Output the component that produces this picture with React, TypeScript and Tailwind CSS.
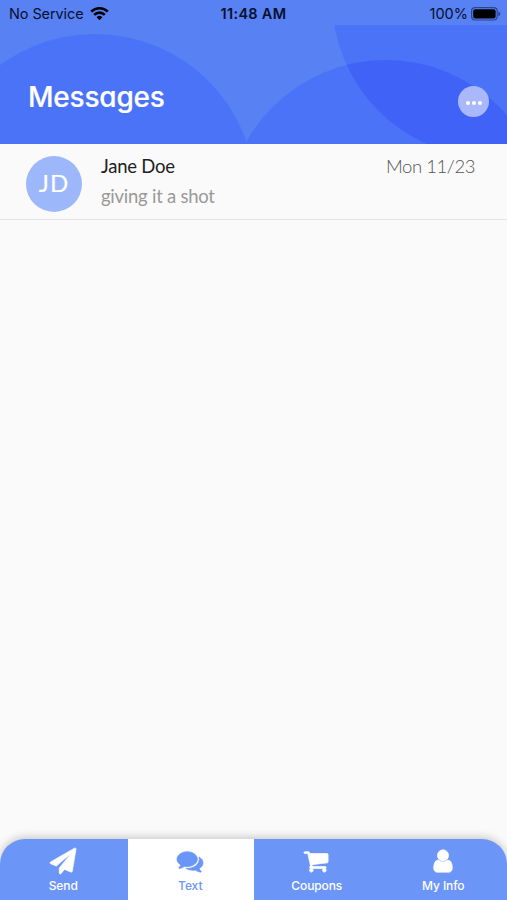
import clsx from "clsx";

const ICONS = {
  send: "M1764 11q33 24 27 64l-256 1536q-5 29-32 45-14 8-31 8-11 0-24-5l-453-185-242 295q-18 23-49 23-13 0-22-4-19-7-30.5-23.5t-11.5-36.5v-349l864-1059-1069 925-395-162q-37-14-40-55-2-40 32-59l1664-960q15-9 32-9 20 0 36 11z",
  text: "M1408 768q0 139-94 257t-256.5 186.5-353.5 68.5q-86 0-176-16-124 88-278 128-36 9-86 16h-3q-11 0-20.5-8t-11.5-21q-1-3-1-6.5t.5-6.5 2-6l2.5-5 3.5-5.5 4-5 4.5-5 4-4.5q5-6 23-25t26-29.5 22.5-29 25-38.5 20.5-44q-124-72-195-177t-71-224q0-139 94-257t256.5-186.5 353.5-68.5 353.5 68.5 256.5 186.5 94 257zm384 256q0 120-71 224.5t-195 176.5q10 24 20.5 44t25 38.5 22.5 29 26 29.5 23 25q1 1 4 4.5t4.5 5 4 5 3.5 5.5l2.5 5 2 6 .5 6.5-1 6.5q-3 14-13 22t-22 7q-50-7-86-16-154-40-278-128-90 16-176 16-271 0-472-132 58 4 88 4 161 0 309-45t264-129q125-92 192-212t67-254q0-77-23-152 129 71 204 178t75 230z",
  cart: "M704 1536q0 52-38 90t-90 38-90-38-38-90 38-90 90-38 90 38 38 90zm896 0q0 52-38 90t-90 38-90-38-38-90 38-90 90-38 90 38 38 90zm128-1088v512q0 24-16.5 42.5t-40.5 21.5l-1044 122q13 60 13 70 0 16-24 64h920q26 0 45 19t19 45-19 45-45 19h-1024q-26 0-45-19t-19-45q0-11 8-31.5t16-36 21.5-40 15.5-29.5l-177-823h-204q-26 0-45-19t-19-45 19-45 45-19h256q16 0 28.5 6.5t19.5 15.5 13 24.5 8 26 5.5 29.5 4.5 26h1201q26 0 45 19t19 45z",
  user: "M1536 1399q0 109-62.5 187t-150.5 78h-854q-88 0-150.5-78t-62.5-187q0-85 8.5-160.5t31.5-152 58.5-131 94-89 134.5-34.5q131 128 313 128t313-128q76 0 134.5 34.5t94 89 58.5 131 31.5 152 8.5 160.5zm-256-887q0 159-112.5 271.5t-271.5 112.5-271.5-112.5-112.5-271.5 112.5-271.5 271.5-112.5 271.5 112.5 112.5 271.5z",
};

const TABS = [
  { label: "Send", icon: ICONS.send },
  { label: "Text", icon: ICONS.text, active: true },
  { label: "Coupons", icon: ICONS.cart },
  { label: "My Info", icon: ICONS.user },
];

function StatusBar() {
  return (
    <div className="relative grid h-[25px] grid-cols-3 items-center pt-[2px] pr-[6px] pl-[9px] font-['Inter',sans-serif] text-[14.5px] text-[#07102b]">
      <div className="flex items-center gap-[6px]">
        <span className="whitespace-nowrap tracking-[-0.1px]">No Service</span>
        <svg width="19" height="15" viewBox="0 0 19 15" fill="none" stroke="#000" strokeWidth="2.6">
          <path d="M1.2 5.6a11.8 11.8 0 0 1 16.6 0" />
          <path d="M4.2 8.8a7.5 7.5 0 0 1 10.6 0" />
          <path d="M9.5 14.2 6.6 11.3a4.1 4.1 0 0 1 5.8 0z" fill="#000" stroke="none" />
        </svg>
      </div>
      <span className="-ml-[3px] text-center text-[14.5px] font-semibold tracking-[0.3px] whitespace-nowrap">
        11:48 AM
      </span>
      <div className="flex items-center justify-end gap-[3px]">
        <span>100%</span>
        <svg width="30" height="14" viewBox="0 0 30 14">
          <rect x="0.6" y="0.6" width="25.6" height="12.4" rx="3.5" fill="none" stroke="#2d458d" strokeWidth="1.2" />
          <rect x="2.2" y="2.2" width="22.4" height="9.2" rx="2" fill="#000" />
          <path d="M27.4 4.6q2 .8 2 2.3t-2 2.3z" fill="#2d458d" />
        </svg>
      </div>
    </div>
  );
}

function Header() {
  return (
    <header className="relative h-[143.5px] shrink-0 overflow-hidden bg-[#5881f4]">
      {/* Overlapping circles behind the title */}
      <svg className="absolute inset-0" width="507" height="144" viewBox="0 0 507 144">
        <defs>
          <clipPath id="below-status">
            <rect y="25" width="507" height="119" />
          </clipPath>
          <clipPath id="corner">
            <circle cx="492" cy="-2" r="160" />
          </clipPath>
        </defs>
        <g clipPath="url(#below-status)">
          <circle cx="95" cy="194.5" r="160.5" fill="#4b73f7" />
          <circle cx="492" cy="-2" r="160" fill="#4b73f7" />
          <circle cx="386" cy="220" r="160" fill="#4b73f7" />
          <circle cx="386" cy="220" r="160" fill="#4162f7" clipPath="url(#corner)" />
        </g>
      </svg>
      <StatusBar />
      <div className="relative flex items-center justify-between pt-[52px] pr-[18px] pl-[28px]">
        <h1 className="font-['Inter',sans-serif] text-[28px] leading-[36px] font-medium tracking-[-0.2px] text-white [font-feature-settings:'cv11'] [-webkit-text-stroke:0.2px_white]">
          Messages
        </h1>
        <button className="mt-[9px] flex size-[31px] items-center justify-center gap-[2px] rounded-full bg-[#a9b8fa]">
          <span className="mt-[2px] size-[4px] rounded-full bg-white" />
          <span className="mt-[2px] size-[4px] rounded-full bg-white" />
          <span className="mt-[2px] size-[4px] rounded-full bg-white" />
        </button>
      </div>
    </header>
  );
}

function Conversation() {
  return (
    <div className="flex h-[76.5px] shrink-0 border-b border-[#e4e4e4] pt-[12px] pr-[32px] pl-[26px] font-['Lato',sans-serif]">
      <div className="flex size-[56px] items-center justify-center rounded-full bg-[#9db8fa] pb-[2px] text-[24px] tracking-[1px] text-white [-webkit-text-stroke:0.2px_white]">
        JD
      </div>
      <div className="ml-[19px] flex-1 text-[18.5px] leading-[29px] tracking-[-0.25px]">
        <div className="-mt-[3.5px] text-[#222]">Jane Doe</div>
        <div className="mt-[0.5px] text-[#999]">giving it a shot</div>
      </div>
      <div className="-mt-[3.5px] text-[18.5px] leading-[29px] font-light tracking-[-0.45px] text-[#555]">
        Mon 11/23
      </div>
    </div>
  );
}

function TabBar() {
  return (
    <nav className="grid h-[61px] shrink-0 grid-cols-[127.5px_126.5px_126.5px_126.5px] overflow-hidden rounded-t-[25px] bg-[#6b96f7] shadow-[0_-2px_9px_rgba(0,0,0,0.2)]">
      {TABS.map((tab) => (
        <button
          key={tab.label}
          className={clsx(
            "flex flex-col items-center pt-[9px] pr-px font-['Inter',sans-serif] text-[12px] leading-[16px] font-medium [font-feature-settings:'cv11']",
            tab.active ? "bg-white text-[#6b96f7]" : "text-white"
          )}
        >
          <svg
            className="mr-px overflow-visible"
            width="26"
            height="26"
            viewBox="0 0 1792 1792"
            fill="currentColor"
            stroke="currentColor"
            strokeWidth="50"
          >
            <path d={tab.icon} />
          </svg>
          <span className="mt-[4px] tracking-[-0.1px]">{tab.label}</span>
        </button>
      ))}
    </nav>
  );
}

export default function App() {
  return (
    <div className="flex h-screen w-full flex-col overflow-hidden bg-[#fafafa]">
      <Header />
      <main className="flex-1">
        <Conversation />
      </main>
      <TabBar />
    </div>
  );
}
